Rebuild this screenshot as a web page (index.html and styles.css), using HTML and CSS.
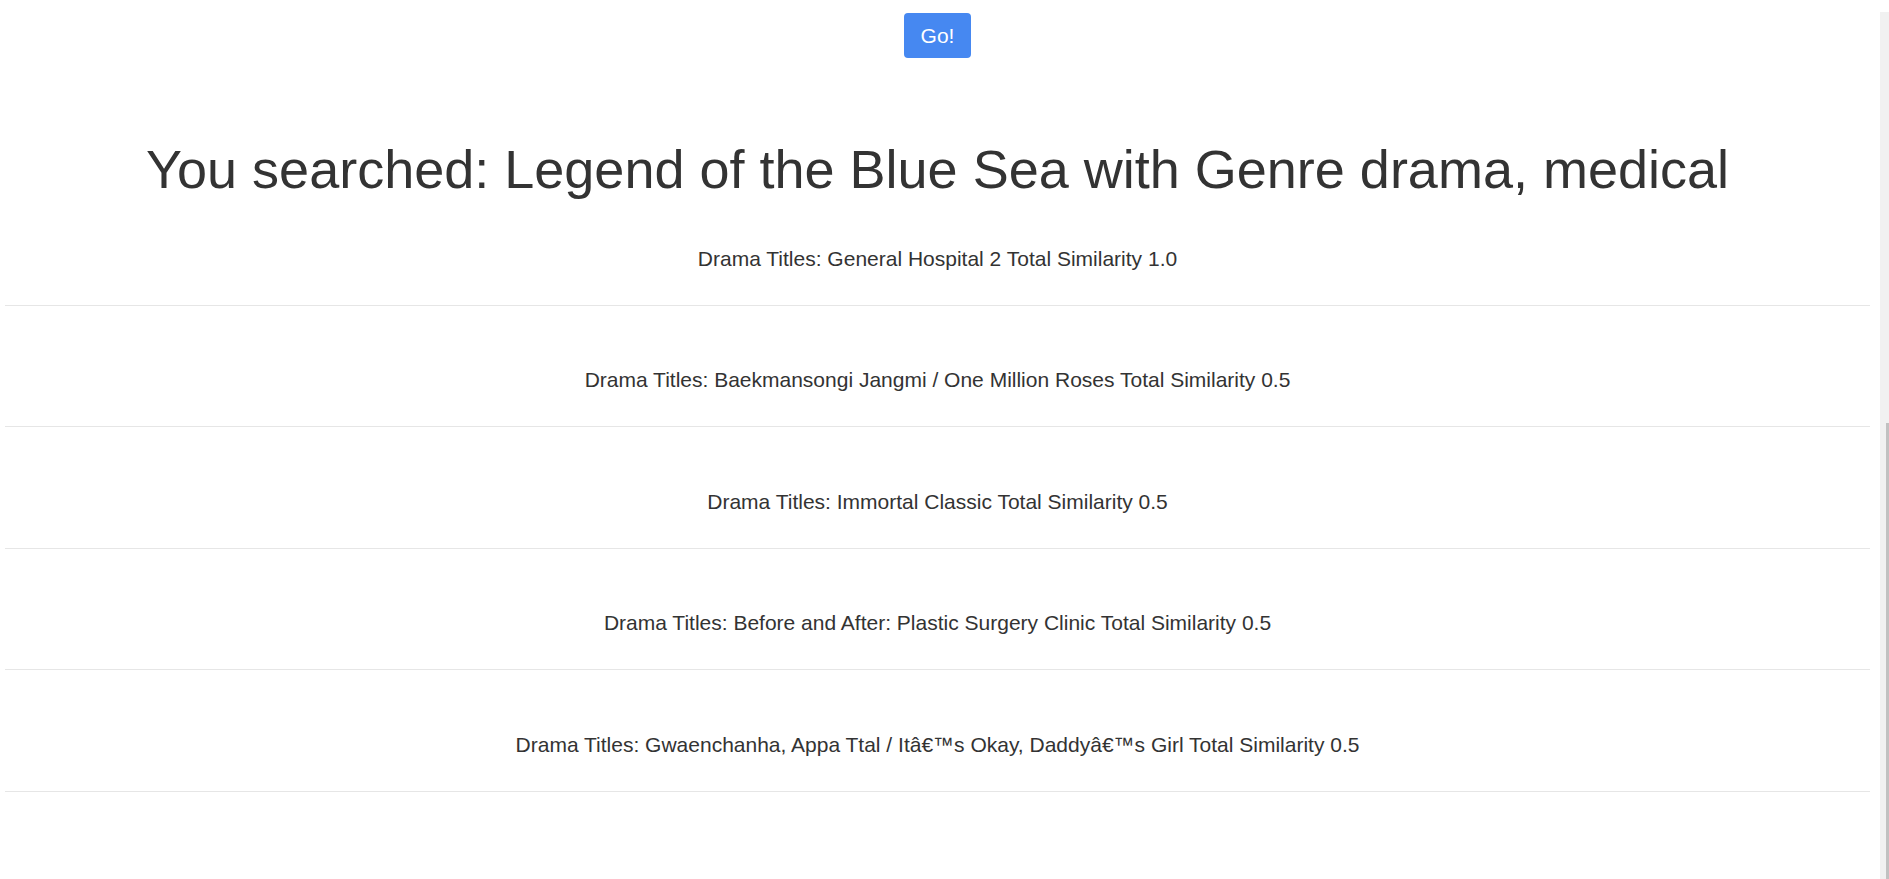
FILE: index.html
```html
<!DOCTYPE html>
<html>
<head>
<meta charset="utf-8">
<title>Drama Search</title>
<link rel="stylesheet" href="styles.css">
</head>
<body>
<div class="page">
  <form class="search">
    <button type="button" class="go-btn">Go!</button>
  </form>
  <h1 class="heading">You searched: Legend of the Blue Sea with Genre drama, medical</h1>
  <div class="results">
    <div class="result">Drama Titles: General Hospital 2 Total Similarity 1.0</div>
    <div class="result">Drama Titles: Baekmansongi Jangmi / One Million Roses Total Similarity 0.5</div>
    <div class="result">Drama Titles: Immortal Classic Total Similarity 0.5</div>
    <div class="result">Drama Titles: Before and After: Plastic Surgery Clinic Total Similarity 0.5</div>
    <div class="result">Drama Titles: Gwaenchanha, Appa Ttal / Itâ€™s Okay, Daddyâ€™s Girl Total Similarity 0.5</div>
  </div>
</div>
<div class="scrollbar"><div class="thumb"></div></div>
</body>
</html>
```

FILE: styles.css
```css
html, body {
  margin: 0;
  padding: 0;
  background: #ffffff;
}

body {
  font-family: "Liberation Sans", Arial, sans-serif;
  color: #333333;
  overflow: hidden;
}

.page {
  width: 1865px;
  margin-left: 5px;
  padding-top: 13px;
  display: flex;
  flex-direction: column;
  align-items: stretch;
}

.search {
  display: flex;
  justify-content: center;
  margin: 0;
}

.go-btn {
  font-family: "Liberation Sans", Arial, sans-serif;
  font-size: 21px;
  color: #ffffff;
  background: #4688f1;
  border: none;
  border-radius: 4px;
  height: 45px;
  padding: 0 17px;
  line-height: 45px;
}

.heading {
  font-size: 54px;
  font-weight: 400;
  line-height: 60px;
  text-align: center;
  margin: 80.5px 0 47px 0;
}

.results {
  display: flex;
  flex-direction: column;
  gap: 61.5px;
}

.result {
  font-size: 21px;
  line-height: 25px;
  text-align: center;
  padding-bottom: 34px;
  border-bottom: 1px solid #e6e6e6;
}

.scrollbar {
  position: fixed;
  right: 0;
  top: 12px;
  bottom: 0;
  width: 9px;
  background: #f1f1f1;
}

.thumb {
  position: absolute;
  right: 0;
  top: 411px;
  bottom: 0;
  width: 3px;
  background: #c1c1c1;
}
```
